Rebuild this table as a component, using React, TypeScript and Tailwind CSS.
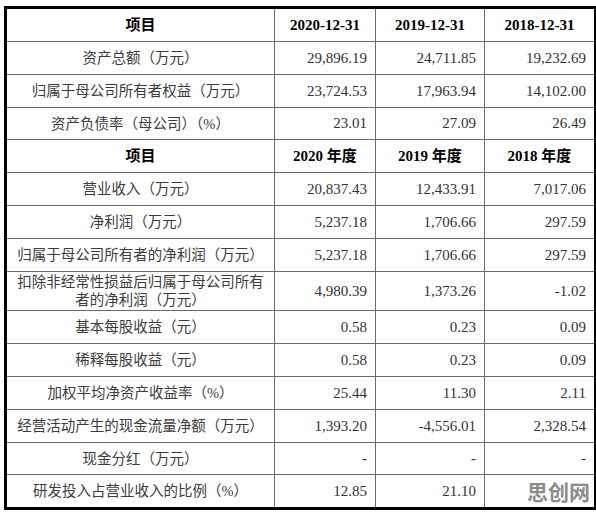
import React from "react";

type Row = { label: React.ReactNode; values: string[]; h: string; header?: boolean };

const rows: Row[] = [
  { label: "项目", values: ["2020-12-31", "2019-12-31", "2018-12-31"], h: "h-[34px]", header: true },
  { label: "资产总额（万元）", values: ["29,896.19", "24,711.85", "19,232.69"], h: "h-[33px]" },
  { label: "归属于母公司所有者权益（万元）", values: ["23,724.53", "17,963.94", "14,102.00"], h: "h-[33px]" },
  { label: "资产负债率（母公司）（%）", values: ["23.01", "27.09", "26.49"], h: "h-[32px]" },
  { label: "项目", values: ["2020 年度", "2019 年度", "2018 年度"], h: "h-[33px]", header: true },
  { label: "营业收入（万元）", values: ["20,837.43", "12,433.91", "7,017.06"], h: "h-[33px]" },
  { label: "净利润（万元）", values: ["5,237.18", "1,706.66", "297.59"], h: "h-[33px]" },
  { label: "归属于母公司所有者的净利润（万元）", values: ["5,237.18", "1,706.66", "297.59"], h: "h-[33px]" },
  {
    label: (
      <>
        扣除非经常性损益后归属于母公司所有
        <br />
        者的净利润（万元）
      </>
    ),
    values: ["4,980.39", "1,373.26", "-1.02"],
    h: "h-[39px]",
  },
  { label: "基本每股收益（元）", values: ["0.58", "0.23", "0.09"], h: "h-[33px]" },
  { label: "稀释每股收益（元）", values: ["0.58", "0.23", "0.09"], h: "h-[33px]" },
  { label: "加权平均净资产收益率（%）", values: ["25.44", "11.30", "2.11"], h: "h-[33px]" },
  { label: "经营活动产生的现金流量净额（万元）", values: ["1,393.20", "-4,556.01", "2,328.54"], h: "h-[33px]" },
  { label: "现金分红（万元）", values: ["-", "-", "-"], h: "h-[32px]" },
  { label: "研发投入占营业收入的比例（%）", values: ["12.85", "21.10", ""], h: "h-[34px]" },
];

export default function App() {
  return (
    <div className="w-[596px] h-[512px] bg-white relative font-['Liberation_Serif','Noto_Sans_CJK_SC',serif]">
      <div className="pt-[6px] pl-[4px]">
        <table className="border-collapse border-[3px] border-black w-[590px] table-fixed">
          <colgroup>
            <col className="w-[269px]" />
            <col className="w-[101px]" />
            <col className="w-[109px]" />
            <col className="w-[111px]" />
          </colgroup>
          <tbody>
            {rows.map((r, i) => (
              <tr key={i} className={r.h}>
                <td
                  className={`border border-[#6b6b6b] text-center whitespace-nowrap leading-[18px] p-0 ${
                    r.header ? "font-bold text-black text-[15px]" : "text-[#3c3c3c] text-[14.5px]"
                  }`}
                >
                  {r.label}
                </td>
                {r.values.map((v, j) => (
                  <td
                    key={j}
                    className={`border border-[#6b6b6b] whitespace-nowrap text-[15px] py-0 ${
                      r.header
                        ? "font-bold text-black text-center px-0"
                        : "text-[#333] text-right pr-[8px] pl-0"
                    }`}
                  >
                    {v}
                  </td>
                ))}
              </tr>
            ))}
          </tbody>
        </table>
      </div>
      <div className="absolute left-[527px] top-[476px] text-[21px] leading-[30px] font-bold tracking-[0px] text-[#8c8c8c] font-['Noto_Sans_CJK_SC',sans-serif] [text-shadow:0_0_2px_#fff]">
        思创网
      </div>
    </div>
  );
}
